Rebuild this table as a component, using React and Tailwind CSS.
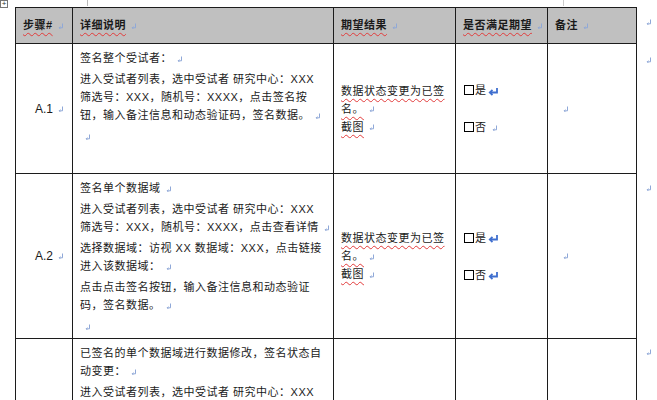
import React from "react";

const font = { fontFamily: '"Liberation Sans", "Noto Sans CJK SC", sans-serif' };

const Mark = () => (
  <svg width="6" height="7" viewBox="0 0 6 7" className="inline-block ml-[5px] -mr-[11px] align-middle">
    <path d="M4.5 0.5 V4.8 H1.2" stroke="#8fa8d8" strokeWidth="1" fill="none" />
    <path d="M2.4 3.6 L1.2 4.8 L2.4 6" stroke="#8fa8d8" strokeWidth="1" fill="none" />
  </svg>
);

const Ret = () => (
  <svg width="11" height="9" viewBox="0 0 11 9" className="inline-block ml-[1px] align-middle">
    <path d="M9 1 V5.5 H2.5" stroke="#3f6fcf" strokeWidth="1.8" fill="none" />
    <path d="M4.5 3 L1.8 5.5 L4.5 8" stroke="#3f6fcf" strokeWidth="1.8" fill="none" />
  </svg>
);

const Box = () => <span className="inline-block w-[10px] h-[10px] border border-black align-middle mr-[1px] mb-[2px]" />;

const Wavy = ({ children }) => (
  <span className="underline decoration-wavy decoration-[#e23b3b] decoration-1 underline-offset-[3px]">{children}</span>
);

const P = ({ children }) => <p className="mb-[3px]">{children}</p>;

const Expect = () => (
  <div className="leading-[18px]">
    <div>
      <Wavy>数据状态变更为已签</Wavy>
    </div>
    <div>
      <Wavy>名。</Wavy>
      <Mark />
    </div>
    <div>
      <Wavy>截图</Wavy>
      <Mark />
    </div>
  </div>
);

const Check = ({ lastRet }) => (
  <div className="flex flex-col gap-[19px] leading-[18px]">
    <div>
      <Box />是<Ret />
    </div>
    <div>
      <Box />否{lastRet ? <Ret /> : <Mark />}
    </div>
  </div>
);

const cell = "border-[1.5px] border-[#1c1c1c]";

export default function App() {
  const rows = [
    {
      id: "A.1",
      h: "h-[130px]",
      desc: [
        "签名整个受试者：",
        "进入受试者列表，选中受试者 研究中心：XXX 筛选号：XXX，随机号：XXXX，点击签名按钮，输入备注信息和动态验证码，签名数据。",
        "",
      ],
      last: false,
    },
    {
      id: "A.2",
      h: "h-[162px]",
      desc: [
        "签名单个数据域",
        "进入受试者列表，选中受试者 研究中心：XXX 筛选号：XXX，随机号：XXXX，点击查看详情",
        "选择数据域：访视 XX 数据域：XXX，点击链接进入该数据域：",
        "点击点击签名按钮，输入备注信息和动态验证码，签名数据。",
        "",
      ],
      last: true,
    },
  ];

  return (
    <div className="relative w-[657px] h-[400px] overflow-hidden bg-white text-[#1a1a1a]" style={font}>
      <div className="absolute left-0 top-0 w-[8px] h-[8px] border border-[#777] bg-white flex items-center justify-center text-[8px] leading-none text-[#333]">
        +
      </div>
      <div className="absolute left-[87px] top-0 w-px h-[6px] bg-[#bbb]" />
      <div className="absolute left-[563px] top-0 w-px h-[6px] bg-[#ccc]" />
      <div className="flex pt-[7px] pl-[15px]">
        <table className="table-fixed border-collapse text-[11px] tracking-[0.5px] w-[621px]">
          <colgroup>
            <col className="w-[57px]" />
            <col className="w-[261px]" />
            <col className="w-[122px]" />
            <col className="w-[92px]" />
            <col className="w-[89px]" />
          </colgroup>
          <thead>
            <tr className="h-[36px] bg-[#c0c0c0] font-bold text-left">
              <th className={cell + " align-middle pl-[7px]"}>
                <Wavy>步骤#</Wavy>
                <Mark />
              </th>
              <th className={cell + " align-middle pl-[7px]"}>
                <Wavy>详细说明</Wavy>
                <Mark />
              </th>
              <th className={cell + " align-middle pl-[7px]"}>
                <Wavy>期望结果</Wavy>
                <Mark />
              </th>
              <th className={cell + " align-middle pl-[7px]"}>
                <Wavy>是否满足期望</Wavy>
                <Mark />
              </th>
              <th className={cell + " align-middle pl-[7px]"}>
                备注
                <Mark />
              </th>
            </tr>
          </thead>
          <tbody>
            {rows.map((r) => (
              <tr key={r.id} className={r.h}>
                <td className={cell + " align-middle text-center text-[12px] tracking-normal"}>
                  {r.id}
                  <Mark />
                </td>
                <td className={cell + " align-top px-[7px] pt-[5px] leading-[18px]"}>
                  {r.desc.map((t, i) => (
                    <P key={i}>
                      {t}
                      <Mark />
                    </P>
                  ))}
                </td>
                <td className={cell + " align-middle px-[7px]"}>
                  <Expect />
                </td>
                <td className={cell + " align-middle pl-[8px]"}>
                  <Check lastRet={r.last} />
                </td>
                <td className={cell + " align-middle pl-[10px]"}>
                  <Mark />
                </td>
              </tr>
            ))}
            <tr className="h-[80px]">
              <td className={cell} />
              <td className={cell + " align-top px-[7px] pt-[5px] leading-[18px]"}>
                <P>
                  已签名的单个数据域进行数据修改，签名状态自动变更：
                  <Mark />
                </P>
                <P>进入受试者列表，选中受试者 研究中心：XXX</P>
              </td>
              <td className={cell} />
              <td className={cell} />
              <td className={cell} />
            </tr>
          </tbody>
        </table>
        <div className="flex flex-col pl-[4px]">
          <div className="h-[12px]" />
          <Mark />
          <div className="h-[31px]" />
          <Mark />
          <div className="h-[121px]" />
          <Mark />
          <div className="h-[157px]" />
          <Mark />
        </div>
      </div>
    </div>
  );
}
